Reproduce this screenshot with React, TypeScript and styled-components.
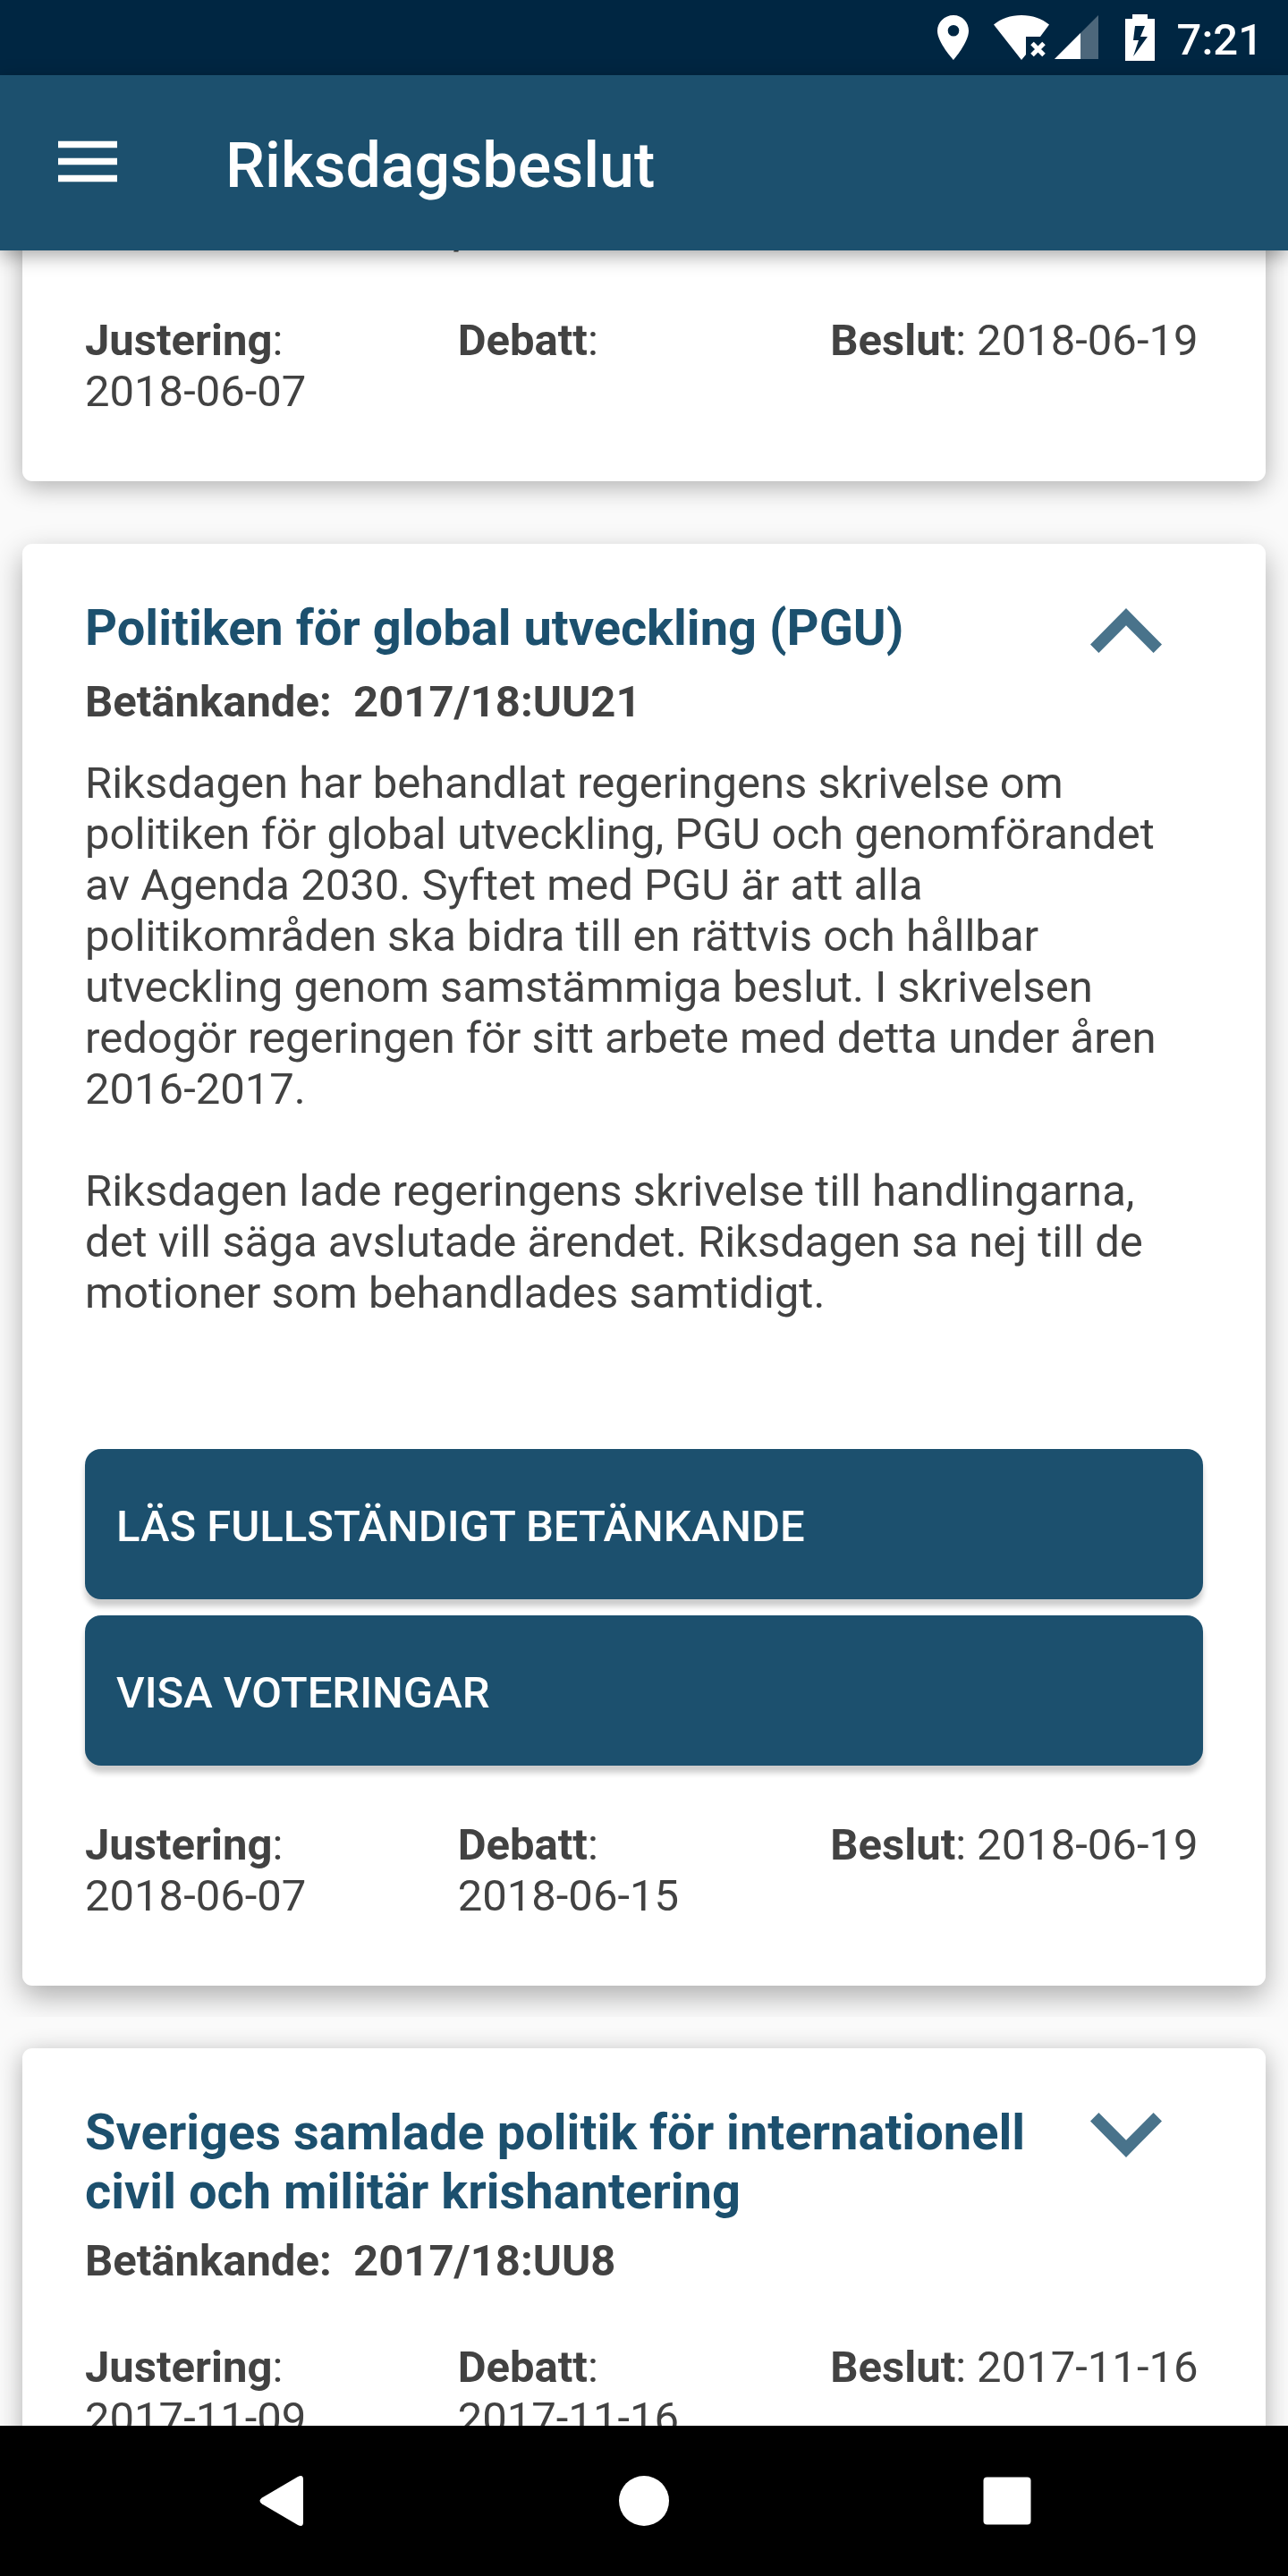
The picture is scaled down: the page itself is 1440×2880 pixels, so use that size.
import React, { useLayoutEffect, useRef, useState } from "react";
import styled, { createGlobalStyle } from "styled-components";

const colors = {
  primary: "#1c506e",
  primaryDark: "#002642",
  chevron: "#49738b",
  text: "#424242",
  page: "#fafafa",
};

const GlobalStyle = createGlobalStyle`
  *, *::before, *::after { box-sizing: border-box; }
  body {
    margin: 0;
    background: ${colors.page};
    color: ${colors.text};
    font-family: Roboto, "Liberation Sans", sans-serif;
    font-size: 49px;
    line-height: 57px;
  }
  h1, h2, p, ul, dl, dt, dd { margin: 0; padding: 0; }
  button { font: inherit; color: inherit; border: 0; padding: 0; background: none; cursor: pointer; }
  svg { display: block; }
`;

const Screen = styled.div`
  display: flex;
  flex-direction: column;
  height: 100vh;
`;

const StatusBar = styled.div`
  flex: none;
  display: flex;
  align-items: center;
  justify-content: flex-end;
  height: 84px;
  padding-right: 28px;
  background: ${colors.primaryDark};
  color: #fff;
`;

const StatusIcon = styled.svg<{ $gap: number }>`
  flex: none;
  margin-right: ${(p) => p.$gap}px;
`;

const Clock = styled.time`
  padding-top: 4px;
  font-weight: 500;
`;

const AppBar = styled.header`
  position: relative;
  z-index: 1;
  flex: none;
  display: flex;
  align-items: center;
  gap: 120px;
  height: 196px;
  padding: 0 64px;
  background: ${colors.primary};
  color: #fff;
  box-shadow: 0 6px 20px rgba(0, 0, 0, 0.34);
`;

const MenuButton = styled.button`
  flex: none;
`;

const AppTitle = styled.h1`
  padding-top: 5px;
  font-size: 70px;
  line-height: 84px;
  font-weight: 500;
`;

const Feed = styled.main`
  flex: 1;
  min-height: 0;
  overflow-y: auto;
  scrollbar-width: none;
`;

const Slot = styled.div`
  overflow: hidden;
  padding: 35px 25px;
`;

const Card = styled.article<{ $raised?: boolean }>`
  padding: 61px 70px 72px;
  border-radius: 11px;
  background: #fff;
  box-shadow: ${(p) =>
    p.$raised
      ? "0 12px 32px rgba(0, 0, 0, 0.31)"
      : "0 6px 28px rgba(0, 0, 0, 0.31)"};
`;

const CardHead = styled.div`
  display: flex;
  align-items: flex-start;
  justify-content: space-between;
  gap: 70px;
  min-height: 71px;
  margin-bottom: 16px;
  padding-right: 46px;
`;

const CardTitle = styled.h2`
  color: ${colors.primary};
  font-size: 56px;
  line-height: 66px;
  font-weight: 700;
`;

const ToggleButton = styled.button`
  flex: none;
  margin-top: 11px;
`;

const Reference = styled.p`
  padding-bottom: 2px;
  font-weight: 700;
  white-space: pre-wrap;
`;

const Summary = styled.div`
  display: flex;
  flex-direction: column;
  gap: 57px;
  margin-top: 32px;
`;

const Actions = styled.div`
  display: flex;
  flex-direction: column;
  gap: 18px;
  margin-top: 146px;
`;

const ActionButton = styled.button`
  height: 168px;
  padding: 5px 35px 0;
  border-radius: 18px;
  background: ${colors.primary};
  color: #fff;
  font-weight: 500;
  text-align: left;
  text-transform: uppercase;
  box-shadow: 0 8px 6px rgba(0, 0, 0, 0.2);
`;

const Dates = styled.dl`
  display: grid;
  grid-template-columns: repeat(3, 1fr);
  margin-top: 60px;
`;

const DateCell = styled.div`
  display: flex;
  flex-wrap: wrap;
  align-content: flex-start;
  column-gap: 12px;
  padding-right: 3px;
  white-space: nowrap;
`;

const NavBar = styled.nav`
  flex: none;
  display: flex;
  align-items: center;
  justify-content: center;
  gap: 346px;
  height: 168px;
  background: #000;
`;

const NavButton = styled.button`
  width: 60px;
  height: 60px;
  display: grid;
  place-items: center;
`;

function Chevron({ up }: { up: boolean }) {
  return (
    <svg width="80" height="50" viewBox="0 0 80 50" fill={colors.chevron} aria-hidden="true">
      {up ? (
        <path d="M40 0 0 40.500l9.400 9.400L40 19.300l30.600 30.600 9.400-9.400z" />
      ) : (
        <path d="M9.400 0 0 9.400 40 50 80 9.400 70.600 0 40 30.700z" />
      )}
    </svg>
  );
}

type Decision = {
  title?: string;
  reference: string;
  summary: string[];
  adjusted: string;
  debated: string;
  decided: string;
  open?: boolean;
};

const decisions: Decision[] = [
  {
    reference: "2017/18:UU",
    summary: [],
    adjusted: "2018-06-07",
    debated: "",
    decided: "2018-06-19",
  },
  {
    title: "Politiken för global utveckling (PGU)",
    reference: "2017/18:UU21",
    summary: [
      "Riksdagen har behandlat regeringens skrivelse om politiken för global utveckling, PGU och genomförandet av Agenda 2030. Syftet med PGU är att alla politikområden ska bidra till en rättvis och hållbar utveckling genom samstämmiga beslut. I skrivelsen redogör regeringen för sitt arbete med detta under åren 2016-2017.",
      "Riksdagen lade regeringens skrivelse till handlingarna, det vill säga avslutade ärendet. Riksdagen sa nej till de motioner som behandlades samtidigt.",
    ],
    adjusted: "2018-06-07",
    debated: "2018-06-15",
    decided: "2018-06-19",
    open: true,
  },
  {
    title: "Sveriges samlade politik för internationell civil och militär krishantering",
    reference: "2017/18:UU8",
    summary: [],
    adjusted: "2017-11-09",
    debated: "2017-11-16",
    decided: "2017-11-16",
  },
];

function LabeledDate({ label, value }: { label: string; value: string }) {
  return (
    <DateCell>
      <dt>
        <b>{label}</b>:
      </dt>
      <dd>{value}</dd>
    </DateCell>
  );
}

function DecisionCard({ item }: { item: Decision }) {
  const [open, setOpen] = useState(!!item.open);
  return (
    <Slot>
      <Card $raised={open}>
        {item.title && (
          <CardHead>
            <CardTitle>{item.title}</CardTitle>
            <ToggleButton
              type="button"
              aria-expanded={open}
              aria-label={item.title}
              onClick={() => setOpen(!open)}
            >
              <Chevron up={open} />
            </ToggleButton>
          </CardHead>
        )}
        <Reference>{"Betänkande:  " + item.reference}</Reference>
        {open && (
          <>
            <Summary>
              {item.summary.map((text) => (
                <p key={text}>{text}</p>
              ))}
            </Summary>
            <Actions>
              <ActionButton type="button">Läs fullständigt betänkande</ActionButton>
              <ActionButton type="button">Visa voteringar</ActionButton>
            </Actions>
          </>
        )}
        <Dates>
          <LabeledDate label="Justering" value={item.adjusted} />
          <LabeledDate label="Debatt" value={item.debated} />
          <LabeledDate label="Beslut" value={item.decided} />
        </Dates>
      </Card>
    </Slot>
  );
}

export default function App() {
  const feed = useRef<HTMLElement>(null);

  // The list opens scrolled a little way into the first decision.
  useLayoutEffect(() => {
    if (feed.current) feed.current.scrollTop = 143;
  }, []);

  return (
    <Screen>
      <GlobalStyle />
      <StatusBar>
        <StatusIcon $gap={27} width="36" height="50" viewBox="0 0 36 50" fill="#fff">
          <path
            fillRule="evenodd"
            d="M18 0C8 0 0 8 0 17.500 0 30.500 18 50 18 50s17-19.500 17-32.500C35 8 28 0 18 0zm0 23.500a6.300 6.300 0 1 1 0-12.600 6.300 6.300 0 0 1 0 12.600z"
          />
        </StatusIcon>
        <StatusIcon $gap={6} width="62" height="50" viewBox="0 0 62 50" fill="#fff">
          <path d="M31 0C19 0 8 4 0 10.500L31 50l5-6V24h16L62 10.500C54 4 43 0 31 0z" />
          <path d="M43 31.500l13 13M56 31.500L43 44.500" stroke="#fff" strokeWidth="5" />
        </StatusIcon>
        <StatusIcon $gap={30} width="49" height="50" viewBox="0 0 49 50" fill="#fff">
          <path d="M49 0v49H0z" opacity="0.300" />
          <path d="M29 20v29H0z" />
        </StatusIcon>
        <StatusIcon $gap={25} width="33" height="52" viewBox="0 0 33 52" fill="#fff">
          <path
            fillRule="evenodd"
            d="M8 0h17v5h8v47H0V5h8zM11 13 9 29h6l-6 18 16-22h-8l5-12z"
          />
        </StatusIcon>
        <Clock>7:21</Clock>
      </StatusBar>
      <AppBar>
        <MenuButton type="button" aria-label="Meny">
          <svg width="68" height="50" viewBox="0 0 68 50" fill="#fff">
            <path d="M1 0.700h66v7.600H1zM1 19.700h66v7.600H1zM1 38.700h66v7.600H1z" />
          </svg>
        </MenuButton>
        <AppTitle>Riksdagsbeslut</AppTitle>
      </AppBar>
      <Feed ref={feed}>
        {decisions.map((item) => (
          <DecisionCard key={item.reference} item={item} />
        ))}
      </Feed>
      <NavBar>
        <NavButton type="button" aria-label="Tillbaka">
          <svg width="50" height="58" viewBox="0 0 50 58" fill="#fff">
            <path d="M4 25.500 44 2q6-3 6 3v48q0 6-6 3L4 32.500q-5-3.500 0-7z" />
          </svg>
        </NavButton>
        <NavButton type="button" aria-label="Hem">
          <svg width="58" height="58" viewBox="0 0 58 58" fill="#fff">
            <circle cx="29" cy="29" r="28" />
          </svg>
        </NavButton>
        <NavButton type="button" aria-label="Översikt">
          <svg width="54" height="54" viewBox="0 0 54 54" fill="#fff">
            <rect x="0.500" y="0.500" width="53" height="53" rx="4" />
          </svg>
        </NavButton>
      </NavBar>
    </Screen>
  );
}
